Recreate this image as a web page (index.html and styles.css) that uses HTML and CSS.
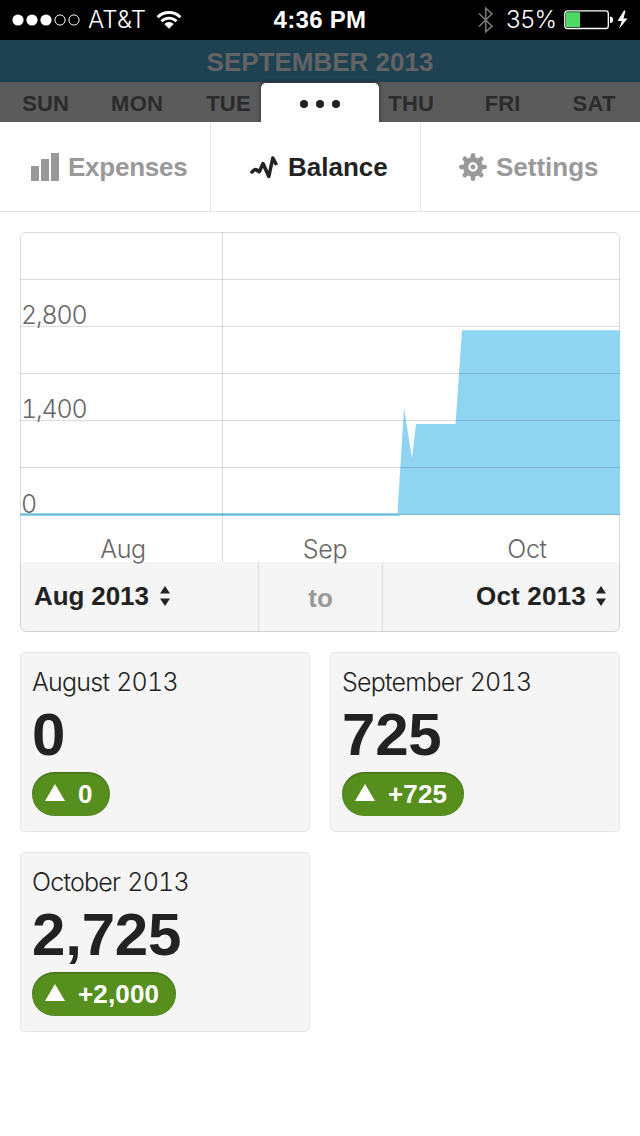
FILE: index.html
```html
<!DOCTYPE html>
<html lang="en">
<head>
<meta charset="utf-8">
<title>Balance</title>
<link rel="stylesheet" href="styles.css">
</head>
<body>
<header class="status">
  <div class="carrier">
    <svg class="signal" width="68" height="12" viewBox="0 0 68 12"><g fill="#fff"><circle cx="6" cy="6" r="5.6"/><circle cx="20" cy="6" r="5.6"/><circle cx="34" cy="6" r="5.6"/></g><g fill="none" stroke="#fff"><circle cx="48" cy="6" r="5.1"/><circle cx="62" cy="6" r="5.1"/></g></svg>
    <span class="carrier-name">AT&amp;T</span>
    <svg class="wifi" width="26" height="20" viewBox="0 0 26 20"><g fill="none" stroke="#fff" stroke-width="2.9"><path d="M1.600 7.200a16.200 16.200 0 0 1 22.800 0"/><path d="M5.500 11.200a10.600 10.600 0 0 1 15 0"/></g><path fill="#fff" d="M8.200 14a6.800 6.800 0 0 1 9.600 0L13 18.800z"/></svg>
  </div>
  <div class="clock">4:36 PM</div>
  <div class="power">
    <svg class="bluetooth" width="16" height="28" viewBox="0 0 16 28"><path d="M1 7.500l13 12.700-6.300 5.600v-23.600l6.300 5.600L1 20.500" fill="none" stroke="#777" stroke-width="1.6"/></svg>
    <span class="percent">35%</span>
    <svg class="battery" width="62" height="20" viewBox="0 0 62 20"><rect x=".8" y=".9" width="43.500" height="17.600" rx="2.500" fill="none" stroke="#fff" stroke-width="1.3"/><path fill="#4cd964" d="M2 2.200h14V17H2z"/><path fill="#fff" d="M46 6.500q3 0 3 3.300T46 13z"/><path fill="#fff" d="M60 .5L53.500 11h4.300L55 19 63.500 8.500H59.500L61.500 .5z"/></svg>
  </div>
</header>
<div class="calendar">
  <div class="month">SEPTEMBER 2013</div>
  <div class="days"><span>SUN</span><span>MON</span><span>TUE</span><span></span><span>THU</span><span>FRI</span><span>SAT</span></div>
  <div class="handle"><i></i><i></i><i></i></div>
</div>
<nav class="tabs">
  <a class="tab tab-expenses"><svg width="28" height="28" viewBox="0 0 28 28"><path fill="#999" d="M0 13h8v15H0zM10 6h8v22h-8zM20 0h8v28h-8z"/></svg><span>Expenses</span></a>
  <a class="tab tab-balance"><svg width="28" height="24" viewBox="0 0 28 24"><path fill="none" stroke="#222" stroke-width="3.500" stroke-linejoin="round" stroke-linecap="butt" d="M1 18.300Q4.500 13.800 6 14.600T9.300 16.800L13 8.500 18.800 21.500 22.800 3 26.500 10"/></svg><span>Balance</span></a>
  <a class="tab tab-settings"><svg width="28" height="28" viewBox="-14 -14 28 28"><g fill="none" stroke="#999" stroke-width="4.600" stroke-linecap="round"><path d="M0-11.700v23.400M-11.700 0h23.400M-8.200-8.200l16.400 16.400M8.200-8.200L-8.200 8.200"/></g><circle r="10" fill="#999"/><circle r="3.600" fill="#999" stroke="#fff" stroke-width="2.300"/></svg><span>Settings</span></a>
</nav>
<main>
  <section class="panel">
    <svg class="chart" width="600" height="330" viewBox="0 0 600 330">
      <path fill="#8fd4f1" d="M0 281H377.500L384 176l8 50 4-34h39.500L442 98.300H600V283H380v1H0z"/>
      <path class="grid" d="M0 47.500H600M0 94.500H600M0 141.500H600M0 188.500H600M0 235.500H600M0 282.500H600M202.500 0V330"/>
      <g class="axis"><text x="1" y="92">2,800</text><text x="1" y="186">1,400</text><text x="1" y="281">0</text></g>
      <g class="axis middle"><text x="103" y="326">Aug</text><text x="305" y="326">Sep</text><text x="507" y="326">Oct</text></g>
    </svg>
    <div class="range">
      <div class="from"><span>Aug 2013</span><svg width="10" height="20" viewBox="0 0 10 20"><path fill="#222" d="M0 7.500L5 0l5 7.500zM0 12.500h10L5 20z"/></svg></div>
      <div class="to">to</div>
      <div class="until"><span>Oct 2013</span><svg width="10" height="20" viewBox="0 0 10 20"><path fill="#222" d="M0 7.500L5 0l5 7.500zM0 12.500h10L5 20z"/></svg></div>
    </div>
  </section>
  <section class="cards">
    <article class="card"><h2>August 2013</h2><strong>0</strong><div class="pill"><svg width="20" height="17" viewBox="0 0 20 17"><path fill="#fff" d="M10 0l10 17H0z"/></svg><span>0</span></div></article>
    <article class="card"><h2>September 2013</h2><strong>725</strong><div class="pill"><svg width="20" height="17" viewBox="0 0 20 17"><path fill="#fff" d="M10 0l10 17H0z"/></svg><span>+725</span></div></article>
    <article class="card"><h2>October 2013</h2><strong>2,725</strong><div class="pill"><svg width="20" height="17" viewBox="0 0 20 17"><path fill="#fff" d="M10 0l10 17H0z"/></svg><span>+2,000</span></div></article>
  </section>
</main>
</body>
</html>
```
FILE: styles.css
```css
* { box-sizing: border-box; }
body { margin: 0; width: 640px; height: 1136px; background: #fff; color: #222; font-family: "Liberation Sans", Arial, sans-serif; }
svg { display: block; flex: none; }
.status { height: 40px; background: #000; color: #fff; display: grid; grid-template-columns: 220px 200px 220px; grid-template-rows: 40px; align-items: center; }
.carrier, .power { display: flex; align-items: center; height: 40px; }
.carrier { padding-left: 12px; }
.carrier-name { margin-left: 8px; width: 58px; font: 300 24px/42px Inter, sans-serif; letter-spacing: .2px; white-space: nowrap; }
.wifi { margin-left: 10px; }
.clock { text-align: center; font-weight: bold; font-size: 24px; line-height: 42px; letter-spacing: .3px; white-space: nowrap; }
.power { padding-left: 58px; }
.percent { margin-left: 12px; width: 50px; font: 300 24px/42px Inter, sans-serif; letter-spacing: -.1px; white-space: nowrap; }
.battery { margin-left: 8px; overflow: visible; }
.calendar { position: relative; height: 82px; font-weight: bold; }
.month { height: 42px; background: #1e4252; color: #636363; font-size: 26px; line-height: 44px; text-align: center; letter-spacing: 0; }
.days { height: 40px; background: #5b5b5b; color: #2b2b2b; display: grid; grid-template-columns: repeat(7, 91.4px); font-size: 22px; line-height: 43px; letter-spacing: .2px; text-align: center; }
.handle { position: absolute; left: 261px; top: 43px; width: 118px; height: 39px; border-radius: 5px 5px 0 0; background: #fff; box-shadow: 0 -1px 4px #222; clip-path: inset(-5px -5px 0); display: flex; justify-content: center; align-items: center; gap: 8px; padding-top: 3px; }
.handle i { width: 8px; height: 8px; border-radius: 50%; background: #222; }
.tabs { display: grid; grid-template-columns: 211px 210px 219px; height: 90px; border-bottom: 1px solid #e5e5e5; }
.tab { display: flex; align-items: center; color: #999; font-size: 26px; font-weight: bold; letter-spacing: -.25px; border-right: 1px solid #e5e5e5; gap: 9px; }
.tab span { line-height: 30px; }
.tab-expenses { padding-left: 31px; }
.tab-balance { padding-left: 39px; color: #222; gap: 10px; letter-spacing: 0; }
.tab-settings { padding-left: 38px; border-right: 0; letter-spacing: 0; }
main { padding: 20px; }
.panel { position: relative; height: 400px; }
.panel::after { content: ""; position: absolute; inset: 0; border: 1px solid rgba(0,0,0,.14); border-radius: 6px; }
.chart { position: relative; z-index: 1; overflow: visible; }
.grid { fill: none; stroke: #000; stroke-opacity: .14; }
.axis { fill: #666; font: 300 25px Inter, sans-serif; font-variant-numeric: tabular-nums; letter-spacing: -1.2px; }
.middle { text-anchor: middle; letter-spacing: -.3px; }
.range { display: grid; grid-template-columns: 239px 124px 237px; grid-template-rows: 70px; height: 70px; background: #f5f5f5; border-radius: 0 0 6px 6px; font-weight: bold; font-size: 26px; letter-spacing: -.1px; line-height: 68px; }
.from, .until { display: flex; align-items: center; gap: 11px; }
.from span, .until span { height: 70px; line-height: 68px; }
.from { padding-left: 14px; border-right: 1px solid #ddd; }
.until { justify-content: flex-end; padding-right: 14px; gap: 10px; letter-spacing: .2px; }
.from svg, .until svg { margin-top: -2px; }
.to { color: #999; text-align: center; line-height: 72px; border-right: 1px solid #ddd; }
.cards { margin-top: 20px; display: grid; grid-template-columns: 290px 290px; gap: 20px; }
.card { height: 180px; background: #f5f5f5; border: 1px solid #e6e6e6; border-radius: 5px; padding: 11px; display: flex; flex-direction: column; align-items: flex-start; }
.card h2 { margin: 0; font: 300 25px/36px Inter, sans-serif; letter-spacing: -.75px; word-spacing: 1px; white-space: nowrap; font-variant-numeric: tabular-nums; }
.card strong { font-size: 60px; line-height: 70px; height: 72px; letter-spacing: -.2px; }
.pill { height: 44px; border-radius: 22px; background: #578f1f; color: #fff; display: flex; align-items: center; gap: 13px; padding: 0 17px 0 13px; font-weight: bold; font-size: 26px; letter-spacing: .15px; box-shadow: inset 0 1px 2px rgba(0,0,0,.3); }
.pill svg { margin-top: -3px; }
```
